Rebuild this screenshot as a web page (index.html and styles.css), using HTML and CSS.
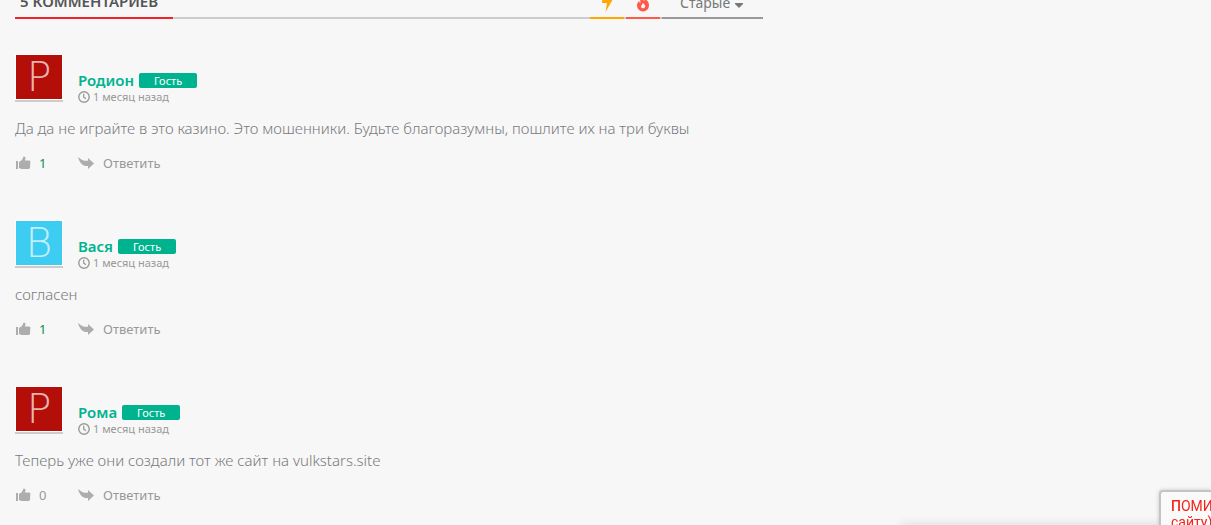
FILE: index.html
```
<!DOCTYPE html>
<html lang="ru">
<head>
    <meta charset="UTF-8" />
    <meta name="viewport" content="width=device-width, initial-scale=1.0" />
    <title>Комментарии</title>
    <link rel="stylesheet" href="styles.css">
</head>
<body>

    <!-- Shared icons -->
    <svg class="sprite" aria-hidden="true">
        <symbol id="clock" viewBox="0 0 12 12">
            <circle cx="6" cy="6" r="5.2" fill="none" stroke="currentColor" stroke-width="1.4" />
            <path d="M5.7 2.8v3.4l2.2 1.4" fill="none" stroke="currentColor" stroke-width="1.3" />
        </symbol>
        <symbol id="thumb" viewBox="0 0 16 14">
            <path d="M1 5h2v8H1z" />
            <path d="M4 6l3-2 1.600-3.500c1.400 0 2.200.9 1.800 2.200L10 4.500h4c1.300 0 1.700 1 1.300 2l-.3 5c-.2 1-.8 1.500-1.800 1.500H6.500L4 12z" />
        </symbol>
        <symbol id="reply" viewBox="0 0 16 14">
            <path d="M0 1l3 2.200c2 1.400 4 1.800 7 1.500V2l6 5.500-6 5.500v-3C5 10.500 1.500 7 0 1z" />
        </symbol>
    </svg>

    <section class="comments">
        <header class="comments-head">
            <h2 class="comments-title">5 КОММЕНТАРИЕВ</h2>
            <div class="sort">
                <button class="sort-button sort-new" aria-label="Новые">
                    <svg width="14" height="20" viewBox="0 0 14 20"><path d="M3 0h8L9.500 7H13L5.500 20 7 11H2z" /></svg>
                </button>
                <button class="sort-button sort-hot" aria-label="Популярные">
                    <svg width="14" height="18" viewBox="0 0 14 18"><path d="M5.500 0c.5 3 2.500 4 2 7 1-.3 1.700-1 1.800-2C12 7 13 9 13 11.500a6 6 0 0 1-12 0C1 9.500 2 8 3.200 7c0 1 .4 1.800 1.300 2C4 5.500 4.200 2 5.500 0zM6.500 9c.3 1-.2 1.500-.8 2-1.200 1-.7 3.200 1.300 3.200s2.800-2 1.700-3.400C8 9.900 7.500 9.300 6.500 9z" /></svg>
                </button>
                <div class="sort-order">
                    <select class="sort-select" aria-label="Порядок">
                        <option>Старые</option>
                    </select>
                    <svg width="8" height="5" viewBox="0 0 8 5"><path d="M0 0h8v1L4 5 0 1z" /></svg>
                </div>
            </div>
        </header>

        <article class="comment">
            <div class="comment-top">
                <div class="avatar avatar-red"><span>P</span></div>
                <div class="comment-meta">
                    <div class="author-row">
                        <span class="author">Родион</span>
                        <span class="label">Гость</span>
                    </div>
                    <div class="date"><svg class="icon-clock"><use href="#clock" /></svg>1 месяц назад</div>
                </div>
            </div>
            <p class="comment-text">Да да не играйте в это казино. Это мошенники. Будьте благоразумны, пошлите их на три буквы</p>
            <div class="actions">
                <button class="vote" aria-label="Нравится"><svg class="icon"><use href="#thumb" /></svg></button>
                <span class="count count-up">1</span>
                <button class="reply"><svg class="icon"><use href="#reply" /></svg>Ответить</button>
            </div>
        </article>

        <article class="comment">
            <div class="comment-top">
                <div class="avatar avatar-blue"><span>B</span></div>
                <div class="comment-meta">
                    <div class="author-row">
                        <span class="author">Вася</span>
                        <span class="label">Гость</span>
                    </div>
                    <div class="date"><svg class="icon-clock"><use href="#clock" /></svg>1 месяц назад</div>
                </div>
            </div>
            <p class="comment-text">согласен</p>
            <div class="actions">
                <button class="vote" aria-label="Нравится"><svg class="icon"><use href="#thumb" /></svg></button>
                <span class="count count-up">1</span>
                <button class="reply"><svg class="icon"><use href="#reply" /></svg>Ответить</button>
            </div>
        </article>

        <article class="comment">
            <div class="comment-top">
                <div class="avatar avatar-red"><span>P</span></div>
                <div class="comment-meta">
                    <div class="author-row">
                        <span class="author">Рома</span>
                        <span class="label">Гость</span>
                    </div>
                    <div class="date"><svg class="icon-clock"><use href="#clock" /></svg>1 месяц назад</div>
                </div>
            </div>
            <p class="comment-text">Теперь уже они создали тот же сайт на vulkstars.site</p>
            <div class="actions">
                <button class="vote" aria-label="Нравится"><svg class="icon"><use href="#thumb" /></svg></button>
                <span class="count">0</span>
                <button class="reply"><svg class="icon"><use href="#reply" /></svg>Ответить</button>
            </div>
        </article>
    </section>

    <!-- Corner notice -->
    <div class="notice-shadow"></div>
    <aside class="notice"><b>П</b>ОМИ<br>сайту)</aside>

</body>
</html>
```

FILE: styles.css
```
* {
    margin: 0;
    padding: 0;
    box-sizing: border-box;
}
body {
    overflow: hidden;
    background: #f7f7f7;
    color: #777a7e;
    font-family: "Noto Sans", "Open Sans", sans-serif;
}
button, select {
    border: none;
    background: none;
    font-family: inherit;
    cursor: pointer;
}
svg {
    fill: currentColor;
    flex: none;
}
.sprite {
    position: absolute;
    width: 0;
    height: 0;
}
.comments {
    width: 100%;
    max-width: 763px;
    padding-left: 15px;
}
/* The header is scrolled partly above the top edge */
.comments-head {
    display: flex;
    justify-content: space-between;
    align-items: flex-end;
    height: 19px;
    box-shadow: inset 0 -2px #cccccc;
}
.comments-title {
    padding: 0 15px 6px 5px;
    border-bottom: 2px solid #f0232a;
    color: #555555;
    font-size: 15px;
    font-weight: 600;
    line-height: 20px;
}
.sort {
    display: flex;
    align-items: flex-end;
    gap: 2px;
}
.sort-button {
    display: flex;
    justify-content: center;
    align-items: flex-end;
    width: 34px;
    height: 30px;
    padding-bottom: 5px;
    border-bottom: 2px solid;
}
.sort-new {
    color: #ffa600;
}
.sort-hot {
    color: #ff5a48;
}
.sort-order {
    display: flex;
    align-items: center;
    gap: 4px;
    padding: 0 20px 4px 18px;
    border-bottom: 2px solid #999999;
    color: #777777;
}
.sort-select {
    appearance: none;
    color: #777777;
    font-size: 14px;
    line-height: 20px;
}
.sort-order svg {
    margin-top: 5px;
}
.comment {
    padding-top: 35px;
    margin-bottom: 12px;
}
.comment-top {
    display: flex;
    gap: 15px;
}
.avatar {
    display: flex;
    justify-content: center;
    align-items: center;
    width: 48px;
    height: 46px;
    border: 1px solid #ffffff;
    box-shadow: 0 2px #cccccc;
    color: rgba(255, 255, 255, 0.7);
    font-family: "DejaVu Sans", sans-serif;
    font-size: 41px;
    font-weight: 200;
    line-height: 44px;
}
.avatar-red {
    background: #b40e08;
}
.avatar-blue {
    background: #3dccf2;
}
.comment-meta {
    padding-top: 17px;
}
.author-row {
    display: flex;
    align-items: center;
    gap: 5px;
    height: 18px;
}
.author {
    color: #00b38f;
    font-size: 15px;
    font-weight: 600;
    line-height: 18px;
}
.label {
    width: 58px;
    border-radius: 2px;
    background: #00b38f;
    color: #ffffff;
    font-size: 11px;
    line-height: 15px;
    text-align: center;
}
.date {
    display: flex;
    align-items: center;
    gap: 3px;
    color: #999999;
    font-size: 11px;
    line-height: 16px;
}
.icon-clock {
    width: 12px;
    height: 12px;
}
.comment-text {
    margin-top: 11px;
    font-size: 15px;
    font-weight: 300;
    line-height: 24px;
}
.actions {
    display: flex;
    align-items: center;
    height: 20px;
    margin-top: 13px;
    color: #999999;
    font-size: 13px;
    line-height: 20px;
}
.icon {
    width: 16px;
    height: 14px;
    color: #adadad;
}
.vote {
    display: flex;
}
.count {
    width: 39px;
    margin-left: 8px;
}
.count-up {
    color: #0b8f4d;
}
.reply {
    display: flex;
    align-items: center;
    gap: 9px;
    color: #999999;
    font-size: 13px;
    line-height: 20px;
}
.notice {
    position: fixed;
    right: 0;
    bottom: 0;
    width: 52px;
    height: 35px;
    padding: 6px 0 0 10px;
    overflow: hidden;
    border-top: 2px solid #c4c4c4;
    border-left: 2px solid #c4c4c4;
    border-top-left-radius: 4px;
    box-shadow: 0 0 4px rgba(0, 0, 0, 0.2);
    background: #fafafa;
    color: #f5221b;
    font-family: Roboto, sans-serif;
    font-size: 14px;
    line-height: 16px;
    white-space: nowrap;
}
.notice b {
    font-weight: 500;
}
.notice-shadow {
    position: fixed;
    right: 0;
    bottom: -2px;
    width: 310px;
    height: 2px;
    box-shadow: 0 0 8px rgba(0, 0, 0, 0.3);
}
```
